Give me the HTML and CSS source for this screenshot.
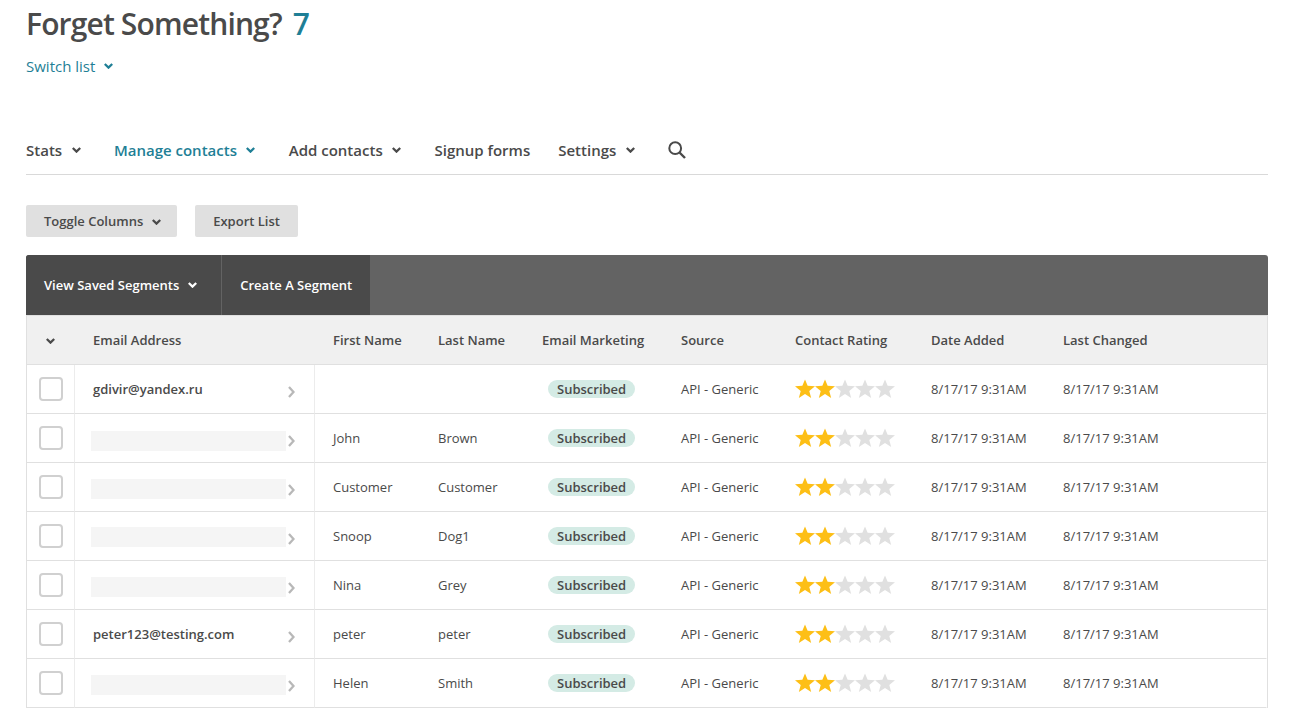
FILE: index.html
```html
<!DOCTYPE html>
<html>
<head>
  <title>Forget Something? - Contacts</title>
  <link rel="stylesheet" href="styles.css">
</head>
<body>
  <svg class="sprites" width="0" height="0">
    <symbol id="chev-down" viewBox="0 0 9 6"><path d="M.8 1l3.700 3.600L8.200 1" fill="none" stroke="currentColor" stroke-width="2.300"/></symbol>
    <symbol id="chev-right" viewBox="0 0 7 12"><path d="M1 1l4.500 5L1 11" fill="none" stroke="currentColor" stroke-width="2.300"/></symbol>
    <symbol id="star" viewBox="0 0 20 20"><path d="M10 .5l2.650 6.360 7.340.400-5.710 4.630 1.890 7.100L10 15l-6.170 3.990 1.890-7.100L.01 7.260l7.340-.400z" fill="currentColor"/></symbol>
  </svg>

  <div class="page">
    <h1 class="title">Forget Something? <span class="count">7</span></h1>
    <a class="switch-list" href="#">Switch list <svg class="chev"><use href="#chev-down"/></svg></a>

    <nav class="tabs">
      <a class="tab has-menu" href="#">Stats <svg class="chev"><use href="#chev-down"/></svg></a>
      <a class="tab has-menu active" href="#">Manage contacts <svg class="chev"><use href="#chev-down"/></svg></a>
      <a class="tab has-menu" href="#">Add contacts <svg class="chev"><use href="#chev-down"/></svg></a>
      <a class="tab" href="#">Signup forms</a>
      <a class="tab has-menu" href="#">Settings <svg class="chev"><use href="#chev-down"/></svg></a>
      <a class="search" href="#">
        <svg width="18" height="18" viewBox="0 0 18 18"><circle cx="7.200" cy="7.200" r="5.900" fill="none" stroke="currentColor" stroke-width="2"/><path d="M11.500 11.500l5.500 5.500" stroke="currentColor" stroke-width="2.400"/></svg>
      </a>
    </nav>

    <div class="actions">
      <button class="btn">Toggle Columns <svg class="chev"><use href="#chev-down"/></svg></button>
      <button class="btn">Export List</button>
    </div>

    <div class="segments">
      <a class="seg-btn seg-menu" href="#">View Saved Segments <svg class="chev"><use href="#chev-down"/></svg></a>
      <a class="seg-btn" href="#">Create A Segment</a>
    </div>

    <table class="contacts">
      <colgroup>
        <col class="c-check"><col class="c-email"><col class="c-first"><col class="c-last"><col class="c-mkt"><col class="c-source"><col class="c-rating"><col class="c-date"><col>
      </colgroup>
      <thead>
        <tr>
          <th class="check-head"><svg class="chev"><use href="#chev-down"/></svg></th>
          <th>Email Address</th>
          <th>First Name</th>
          <th>Last Name</th>
          <th>Email Marketing</th>
          <th>Source</th>
          <th>Contact Rating</th>
          <th>Date Added</th>
          <th>Last Changed</th>
        </tr>
      </thead>
      <tbody>
        <tr>
          <td class="check"><span class="box"></span></td>
          <td class="email"><div class="email-in"><b>gdivir@yandex.ru</b><svg class="more"><use href="#chev-right"/></svg></div></td>
          <td></td>
          <td></td>
          <td class="mkt"><span class="pill">Subscribed</span></td>
          <td>API - Generic</td>
          <td><div class="stars"><svg class="on"><use href="#star"/></svg><svg class="on"><use href="#star"/></svg><svg><use href="#star"/></svg><svg><use href="#star"/></svg><svg><use href="#star"/></svg></div></td>
          <td>8/17/17 9:31AM</td>
          <td>8/17/17 9:31AM</td>
        </tr>
        <tr>
          <td class="check"><span class="box"></span></td>
          <td class="email"><div class="email-in"><span class="hidden-mail low"></span><svg class="more"><use href="#chev-right"/></svg></div></td>
          <td>John</td>
          <td>Brown</td>
          <td class="mkt"><span class="pill">Subscribed</span></td>
          <td>API - Generic</td>
          <td><div class="stars"><svg class="on"><use href="#star"/></svg><svg class="on"><use href="#star"/></svg><svg><use href="#star"/></svg><svg><use href="#star"/></svg><svg><use href="#star"/></svg></div></td>
          <td>8/17/17 9:31AM</td>
          <td>8/17/17 9:31AM</td>
        </tr>
        <tr>
          <td class="check"><span class="box"></span></td>
          <td class="email"><div class="email-in"><span class="hidden-mail"></span><svg class="more"><use href="#chev-right"/></svg></div></td>
          <td>Customer</td>
          <td>Customer</td>
          <td class="mkt"><span class="pill">Subscribed</span></td>
          <td>API - Generic</td>
          <td><div class="stars"><svg class="on"><use href="#star"/></svg><svg class="on"><use href="#star"/></svg><svg><use href="#star"/></svg><svg><use href="#star"/></svg><svg><use href="#star"/></svg></div></td>
          <td>8/17/17 9:31AM</td>
          <td>8/17/17 9:31AM</td>
        </tr>
        <tr>
          <td class="check"><span class="box"></span></td>
          <td class="email"><div class="email-in"><span class="hidden-mail high"></span><svg class="more"><use href="#chev-right"/></svg></div></td>
          <td>Snoop</td>
          <td>Dog1</td>
          <td class="mkt"><span class="pill">Subscribed</span></td>
          <td>API - Generic</td>
          <td><div class="stars"><svg class="on"><use href="#star"/></svg><svg class="on"><use href="#star"/></svg><svg><use href="#star"/></svg><svg><use href="#star"/></svg><svg><use href="#star"/></svg></div></td>
          <td>8/17/17 9:31AM</td>
          <td>8/17/17 9:31AM</td>
        </tr>
        <tr>
          <td class="check"><span class="box"></span></td>
          <td class="email"><div class="email-in"><span class="hidden-mail"></span><svg class="more"><use href="#chev-right"/></svg></div></td>
          <td>Nina</td>
          <td>Grey</td>
          <td class="mkt"><span class="pill">Subscribed</span></td>
          <td>API - Generic</td>
          <td><div class="stars"><svg class="on"><use href="#star"/></svg><svg class="on"><use href="#star"/></svg><svg><use href="#star"/></svg><svg><use href="#star"/></svg><svg><use href="#star"/></svg></div></td>
          <td>8/17/17 9:31AM</td>
          <td>8/17/17 9:31AM</td>
        </tr>
        <tr>
          <td class="check"><span class="box"></span></td>
          <td class="email"><div class="email-in"><b>peter123@testing.com</b><svg class="more"><use href="#chev-right"/></svg></div></td>
          <td>peter</td>
          <td>peter</td>
          <td class="mkt"><span class="pill">Subscribed</span></td>
          <td>API - Generic</td>
          <td><div class="stars"><svg class="on"><use href="#star"/></svg><svg class="on"><use href="#star"/></svg><svg><use href="#star"/></svg><svg><use href="#star"/></svg><svg><use href="#star"/></svg></div></td>
          <td>8/17/17 9:31AM</td>
          <td>8/17/17 9:31AM</td>
        </tr>
        <tr>
          <td class="check"><span class="box"></span></td>
          <td class="email"><div class="email-in"><span class="hidden-mail"></span><svg class="more"><use href="#chev-right"/></svg></div></td>
          <td>Helen</td>
          <td>Smith</td>
          <td class="mkt"><span class="pill">Subscribed</span></td>
          <td>API - Generic</td>
          <td><div class="stars"><svg class="on"><use href="#star"/></svg><svg class="on"><use href="#star"/></svg><svg><use href="#star"/></svg><svg><use href="#star"/></svg><svg><use href="#star"/></svg></div></td>
          <td>8/17/17 9:31AM</td>
          <td>8/17/17 9:31AM</td>
        </tr>
      </tbody>
    </table>
  </div>
</body>
</html>
```

FILE: styles.css
```css
/* Reset */
body, h1, table, button {
    margin: 0;
    padding: 0;
}

body {
    font-family: "Open Sans", Arial, sans-serif;
    font-size: 13px;
    color: #4a4a4a;
    background-color: #fff;
}

a {
    color: inherit;
    text-decoration: none;
}

.sprites {
    position: absolute;
}

.page {
    padding: 0 40px 13px 26px;
}

.chev {
    width: 9px;
    height: 6px;
    margin-left: 5.6px;
    vertical-align: 3px;
}

/* Heading */
.title {
    font-size: 30px;
    font-weight: 600;
    line-height: 48px;
    letter-spacing: -0.85px;
}

.count {
    margin-left: 4px;
    color: #1f7f96;
}

.switch-list {
    display: inline-block;
    margin-top: 6px;
    font-size: 15px;
    line-height: 24px;
    color: #1f7f96;
}

.switch-list .chev {
    margin-left: 5px;
}

/* Tabs */
.tabs {
    display: flex;
    align-items: center;
    height: 48px;
    margin-top: 48px;
    border-bottom: 1px solid #d9d9d9;
    font-size: 15px;
    font-weight: 600;
}

.tab {
    margin-right: 28px;
}

.tab.has-menu {
    margin-right: 33.3px;
}

.tab.active {
    color: #1f7f96;
}

.search {
    display: flex;
    color: #4a4a4a;
}

/* Buttons */
.actions {
    display: flex;
    gap: 18px;
    margin-top: 30px;
}

.btn {
    height: 32px;
    padding: 0 18px;
    border: none;
    border-radius: 2px;
    background-color: #e0e0e0;
    color: #4a4a4a;
    font-family: inherit;
    font-size: 13px;
    font-weight: 600;
}

.btn .chev {
    margin-right: -2px;
    vertical-align: 1px;
}

/* Segment bar */
.segments {
    display: flex;
    height: 60px;
    margin-top: 18px;
    border-radius: 3px 3px 0 0;
    background-color: #636363;
    overflow: hidden;
}

.seg-btn {
    display: flex;
    align-items: center;
    padding: 0 18px;
    background-color: #4a4a4a;
    color: #fff;
    font-size: 13px;
    font-weight: 600;
}

.seg-btn.seg-menu {
    padding-right: 24px;
}

.seg-btn + .seg-btn {
    margin-left: 1px;
}

.seg-btn .chev {
    margin-left: 9px;
}

/* Contacts table */
.contacts {
    width: 100%;
    table-layout: fixed;
    border-collapse: separate;
    border-spacing: 0;
    border-left: 1px solid #e0e0e0;
    border-right: 1px solid #e0e0e0;
}

.c-check { width: 48px; }
.c-email { width: 240px; }
.c-first { width: 105px; }
.c-last { width: 104px; }
.c-mkt { width: 139px; }
.c-source { width: 114px; }
.c-rating { width: 136px; }
.c-date { width: 132px; }

.contacts th {
    height: 50px;
    padding: 0 0 0 18px;
    box-sizing: border-box;
    border-top: 1px solid #e0e0e0;
    border-bottom: 1px solid #e0e0e0;
    background-color: #f0f0f0;
    text-align: left;
    font-weight: 600;
}

.contacts th.check-head {
    padding: 0 2px 0 0;
    text-align: center;
}

.check-head .chev {
    margin: 0;
    vertical-align: 1px;
}

.contacts td {
    height: 49px;
    padding: 0 0 0 18px;
    box-sizing: border-box;
    border-bottom: 1px solid #e0e0e0;
}

.contacts td:last-child {
    border-right: 1px solid #fff;
}

.contacts td.check {
    padding: 0;
    border-right: 1px solid #ececec;
}

.box {
    display: block;
    width: 24px;
    height: 24px;
    margin: 0 auto;
    box-sizing: border-box;
    border: 2px solid #d0d0d0;
    border-radius: 4px;
    background-color: #fff;
}

.contacts td.email {
    padding: 0;
    border-right: 1px solid #ececec;
}

.email-in {
    display: flex;
    align-items: center;
    padding-left: 16px;
}

.email-in b {
    flex: none;
    width: 193px;
    margin-left: 2px;
    font-weight: 600;
    white-space: nowrap;
}

.hidden-mail {
    flex: none;
    width: 195px;
    height: 20px;
    margin-top: 4px;
    background-color: #f5f5f5;
}

.hidden-mail.low {
    margin-top: 6px;
}

.hidden-mail.high {
    margin-top: 2px;
}

.more {
    flex: none;
    width: 7px;
    height: 12px;
    margin: 6px 0 0 2px;
    color: #b8b8b8;
}

.contacts td.mkt {
    padding-left: 24px;
}

.pill {
    display: inline-block;
    padding: 0 9px;
    border-radius: 9px;
    background-color: #d4ebe5;
    font-weight: 600;
    line-height: 18px;
}

.stars {
    display: flex;
    color: #e0e0e0;
}

.stars svg {
    width: 20px;
    height: 20px;
}

.stars .on {
    color: #fdbf16;
}
```
